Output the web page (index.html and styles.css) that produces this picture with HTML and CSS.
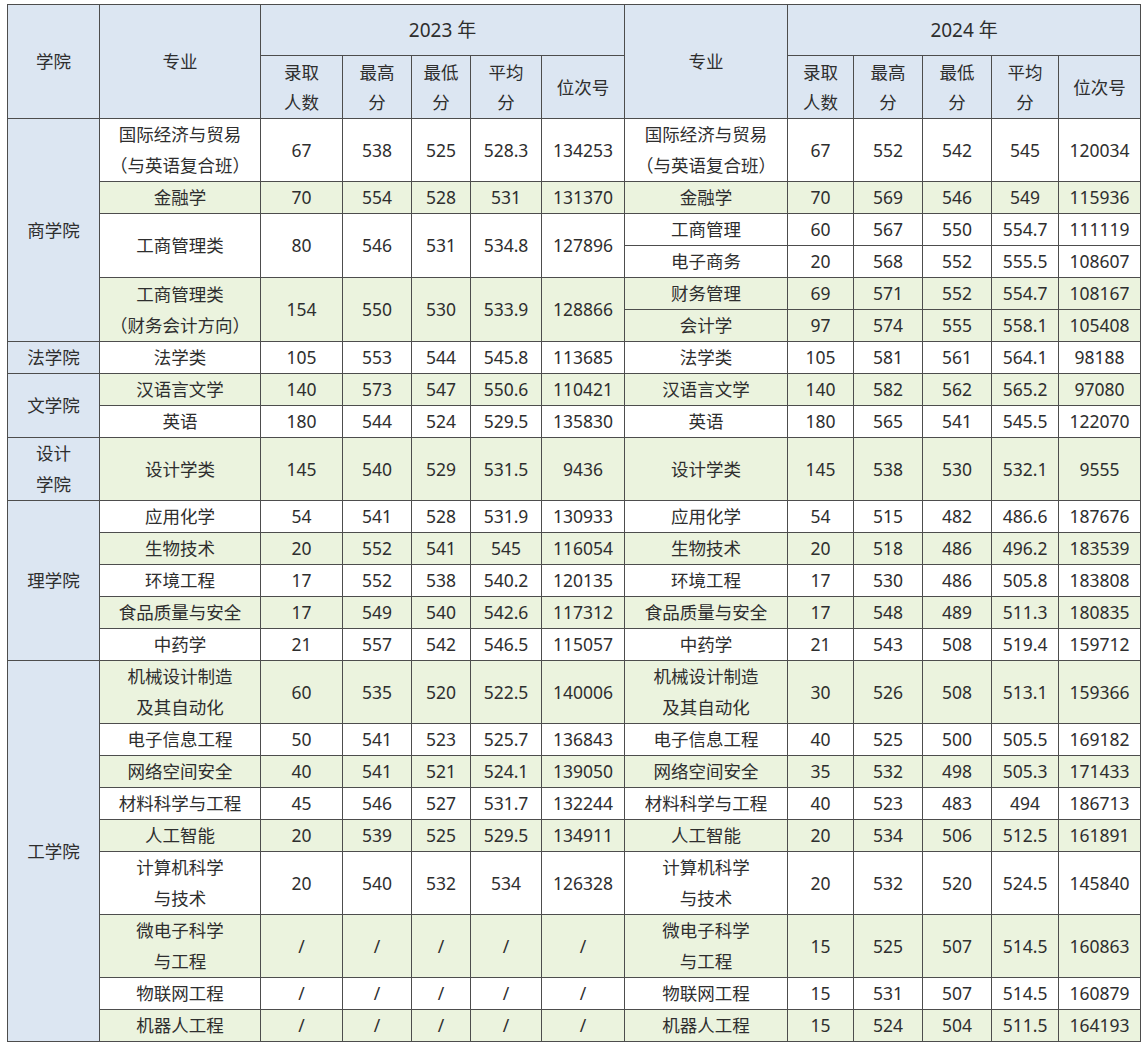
FILE: index.html
```html
<!DOCTYPE html>
<html lang="zh-CN">
<head>
<meta charset="utf-8">
<title>录取分数</title>
<link rel="stylesheet" href="styles.css">
</head>
<body>
<table class="scores">
<colgroup>
<col class="c-college"><col class="c-major1"><col class="c-n1"><col class="c-max1"><col class="c-min1"><col class="c-avg1"><col class="c-rank1">
<col class="c-major2"><col class="c-n2"><col class="c-max2"><col class="c-min2"><col class="c-avg2"><col class="c-rank2">
</colgroup>
<thead>
<tr class="h-year">
<th rowspan="2">学院</th><th rowspan="2">专业</th><th colspan="5" class="year">2023 年</th><th rowspan="2">专业</th><th colspan="5" class="year">2024 年</th>
</tr>
<tr class="h-sub">
<th>录取<br>人数</th><th>最高<br>分</th><th>最低<br>分</th><th>平均<br>分</th><th>位次号</th>
<th>录取<br>人数</th><th>最高<br>分</th><th>最低<br>分</th><th>平均<br>分</th><th>位次号</th>
</tr>
</thead>
<tbody>
<tr class="w d2"><td class="col" rowspan="6">商学院</td><td>国际经济与贸易<br>（与英语复合班）</td><td>67</td><td>538</td><td>525</td><td>528.3</td><td>134253</td><td>国际经济与贸易<br>（与英语复合班）</td><td>67</td><td>552</td><td>542</td><td>545</td><td>120034</td></tr>
<tr class="g d1"><td>金融学</td><td>70</td><td>554</td><td>528</td><td>531</td><td>131370</td><td>金融学</td><td>70</td><td>569</td><td>546</td><td>549</td><td>115936</td></tr>
<tr class="w d1"><td rowspan="2">工商管理类</td><td rowspan="2">80</td><td rowspan="2">546</td><td rowspan="2">531</td><td rowspan="2">534.8</td><td rowspan="2">127896</td><td>工商管理</td><td>60</td><td>567</td><td>550</td><td>554.7</td><td>111119</td></tr>
<tr class="w d1"><td>电子商务</td><td>20</td><td>568</td><td>552</td><td>555.5</td><td>108607</td></tr>
<tr class="g d1"><td rowspan="2">工商管理类<br>（财务会计方向）</td><td rowspan="2">154</td><td rowspan="2">550</td><td rowspan="2">530</td><td rowspan="2">533.9</td><td rowspan="2">128866</td><td>财务管理</td><td>69</td><td>571</td><td>552</td><td>554.7</td><td>108167</td></tr>
<tr class="g d1"><td>会计学</td><td>97</td><td>574</td><td>555</td><td>558.1</td><td>105408</td></tr>
<tr class="w d1"><td class="col">法学院</td><td>法学类</td><td>105</td><td>553</td><td>544</td><td>545.8</td><td>113685</td><td>法学类</td><td>105</td><td>581</td><td>561</td><td>564.1</td><td>98188</td></tr>
<tr class="g d1"><td class="col" rowspan="2">文学院</td><td>汉语言文学</td><td>140</td><td>573</td><td>547</td><td>550.6</td><td>110421</td><td>汉语言文学</td><td>140</td><td>582</td><td>562</td><td>565.2</td><td>97080</td></tr>
<tr class="w d1"><td>英语</td><td>180</td><td>544</td><td>524</td><td>529.5</td><td>135830</td><td>英语</td><td>180</td><td>565</td><td>541</td><td>545.5</td><td>122070</td></tr>
<tr class="g d2"><td class="col">设计<br>学院</td><td>设计学类</td><td>145</td><td>540</td><td>529</td><td>531.5</td><td>9436</td><td>设计学类</td><td>145</td><td>538</td><td>530</td><td>532.1</td><td>9555</td></tr>
<tr class="w d1"><td class="col" rowspan="5">理学院</td><td>应用化学</td><td>54</td><td>541</td><td>528</td><td>531.9</td><td>130933</td><td>应用化学</td><td>54</td><td>515</td><td>482</td><td>486.6</td><td>187676</td></tr>
<tr class="g d1"><td>生物技术</td><td>20</td><td>552</td><td>541</td><td>545</td><td>116054</td><td>生物技术</td><td>20</td><td>518</td><td>486</td><td>496.2</td><td>183539</td></tr>
<tr class="w d1"><td>环境工程</td><td>17</td><td>552</td><td>538</td><td>540.2</td><td>120135</td><td>环境工程</td><td>17</td><td>530</td><td>486</td><td>505.8</td><td>183808</td></tr>
<tr class="g d1"><td>食品质量与安全</td><td>17</td><td>549</td><td>540</td><td>542.6</td><td>117312</td><td>食品质量与安全</td><td>17</td><td>548</td><td>489</td><td>511.3</td><td>180835</td></tr>
<tr class="w d1"><td>中药学</td><td>21</td><td>557</td><td>542</td><td>546.5</td><td>115057</td><td>中药学</td><td>21</td><td>543</td><td>508</td><td>519.4</td><td>159712</td></tr>
<tr class="g d2"><td class="col" rowspan="9">工学院</td><td>机械设计制造<br>及其自动化</td><td>60</td><td>535</td><td>520</td><td>522.5</td><td>140006</td><td>机械设计制造<br>及其自动化</td><td>30</td><td>526</td><td>508</td><td>513.1</td><td>159366</td></tr>
<tr class="w d1"><td>电子信息工程</td><td>50</td><td>541</td><td>523</td><td>525.7</td><td>136843</td><td>电子信息工程</td><td>40</td><td>525</td><td>500</td><td>505.5</td><td>169182</td></tr>
<tr class="g d1"><td>网络空间安全</td><td>40</td><td>541</td><td>521</td><td>524.1</td><td>139050</td><td>网络空间安全</td><td>35</td><td>532</td><td>498</td><td>505.3</td><td>171433</td></tr>
<tr class="w d1"><td>材料科学与工程</td><td>45</td><td>546</td><td>527</td><td>531.7</td><td>132244</td><td>材料科学与工程</td><td>40</td><td>523</td><td>483</td><td>494</td><td>186713</td></tr>
<tr class="g d1"><td>人工智能</td><td>20</td><td>539</td><td>525</td><td>529.5</td><td>134911</td><td>人工智能</td><td>20</td><td>534</td><td>506</td><td>512.5</td><td>161891</td></tr>
<tr class="w d2"><td>计算机科学<br>与技术</td><td>20</td><td>540</td><td>532</td><td>534</td><td>126328</td><td>计算机科学<br>与技术</td><td>20</td><td>532</td><td>520</td><td>524.5</td><td>145840</td></tr>
<tr class="g d2"><td>微电子科学<br>与工程</td><td>/</td><td>/</td><td>/</td><td>/</td><td>/</td><td>微电子科学<br>与工程</td><td>15</td><td>525</td><td>507</td><td>514.5</td><td>160863</td></tr>
<tr class="w d1"><td>物联网工程</td><td>/</td><td>/</td><td>/</td><td>/</td><td>/</td><td>物联网工程</td><td>15</td><td>531</td><td>507</td><td>514.5</td><td>160879</td></tr>
<tr class="g d1"><td>机器人工程</td><td>/</td><td>/</td><td>/</td><td>/</td><td>/</td><td>机器人工程</td><td>15</td><td>524</td><td>504</td><td>511.5</td><td>164193</td></tr>
</tbody>
</table>
</body>
</html>
```
FILE: styles.css
```css
html, body {
  margin: 0;
  padding: 0;
  background: #ffffff;
}
body {
  padding: 4px 0 0 7px;
  font-family: "Noto Sans", "Noto Sans CJK SC", sans-serif;
  color: #2e2e2e;
}
.scores {
  border-collapse: collapse;
  table-layout: fixed;
  width: 1133px;
  font-size: 17.5px;
  border: 1px solid #6a6a6a;
}
.c-college { width: 92px; }
.c-major1 { width: 161px; }
.c-n1 { width: 82px; }
.c-max1 { width: 69px; }
.c-min1 { width: 59px; }
.c-avg1 { width: 71px; }
.c-rank1 { width: 83px; }
.c-major2 { width: 163px; }
.c-n2 { width: 66px; }
.c-max2 { width: 69px; }
.c-min2 { width: 69px; }
.c-avg2 { width: 67px; }
.c-rank2 { width: 82px; }

.scores th,
.scores td {
  border: 1px solid #4d4d4d;
  padding: 0;
  text-align: center;
  vertical-align: middle;
  line-height: 31px;
  white-space: nowrap;
  overflow: hidden;
}
.scores th {
  font-weight: normal;
  background: #dce6f2;
}
.scores th.year {
  font-size: 19px;
}
.h-year th { height: 50px; }
.h-sub th { height: 62px; line-height: 30px; }

.w td { background: #ffffff; }
.g td { background: #ebf3de; }
.scores td.col { background: #dce6f2; }

.d1 td { height: 31px; }
.d2 td { height: 62px; }
```
